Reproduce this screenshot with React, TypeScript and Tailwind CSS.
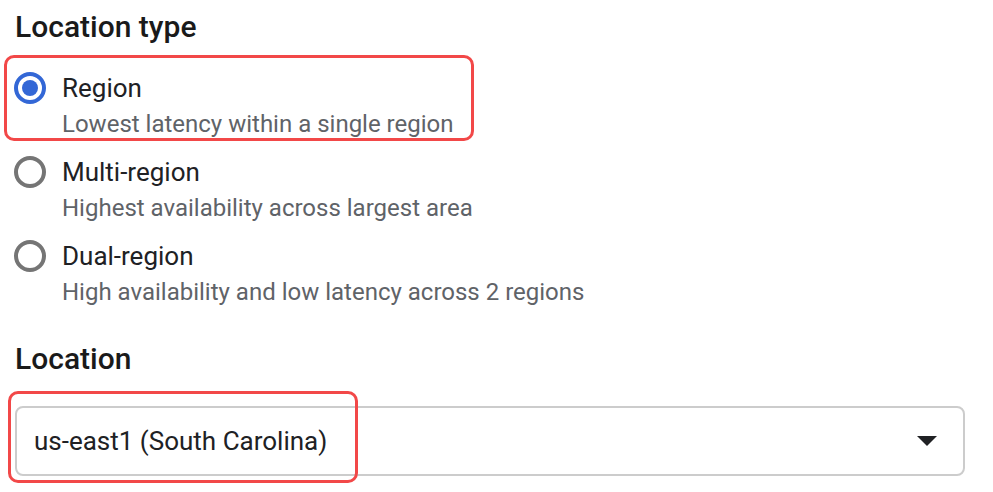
import React from "react";

function Radio({ checked }: { checked?: boolean }) {
  if (checked) {
    return (
      <span className="flex h-[32px] w-[32px] shrink-0 items-center justify-center rounded-full border-[4px] border-[#3367d6]">
        <span className="block h-[16px] w-[16px] rounded-full bg-[#3367d6]" />
      </span>
    );
  }
  return <span className="block h-[32px] w-[32px] shrink-0 rounded-full border-[4px] border-[#757575]" />;
}

function Option({ title, sub, checked, highlight }: { title: string; sub: string; checked?: boolean; highlight?: boolean }) {
  return (
    <div className="relative">
      {highlight && (
        <div className="pointer-events-none absolute left-[-11px] top-[-17px] h-[86px] w-[470px] rounded-[10px] border-[3px] border-[#f24848]" />
      )}
      <div className="-ml-[1px] flex items-center gap-[16px]">
        <Radio checked={checked} />
        <div className="text-[26px] leading-[30px] text-[#202124]">{title}</div>
      </div>
      <div className="mt-[6px] pl-[47px] text-[24px] leading-[28px] text-[#5f6368]">{sub}</div>
    </div>
  );
}

export default function App() {
  return (
    <div className="min-h-screen w-[993px] bg-white pl-[15px] pr-[28px] pt-[9px]" style={{ fontFamily: "Roboto, 'Noto Sans', sans-serif" }}>
      <h2 className="text-[30px] font-medium leading-[36px] text-[#1a1a1a]">Location type</h2>
      <div className="mt-[27px] flex flex-col gap-[18px]">
        <Option title="Region" sub="Lowest latency within a single region" checked highlight />
        <Option title="Multi-region" sub="Highest availability across largest area" />
        <Option title="Dual-region" sub="High availability and low latency across 2 regions" />
      </div>
      <h2 className="mt-[35px] text-[30px] font-medium leading-[36px] text-[#1a1a1a]">Location</h2>
      <div className="relative mt-[29px]">
        <div className="pointer-events-none absolute left-[-7px] top-[-15px] z-10 h-[92px] w-[350px] rounded-[10px] border-[3px] border-[#f24848]" />
        <div className="flex h-[70px] items-center justify-between rounded-[8px] border-2 border-[#cccccc] pl-[17px] pr-[26px]">
          <span className="text-[26px] leading-[30px] text-[#202124]">us-east1 (South Carolina)</span>
          <svg width="20" height="10" viewBox="0 0 20 10">
            <path d="M0 0 L20 0 L10 10 Z" fill="#202124" />
          </svg>
        </div>
      </div>
    </div>
  );
}
